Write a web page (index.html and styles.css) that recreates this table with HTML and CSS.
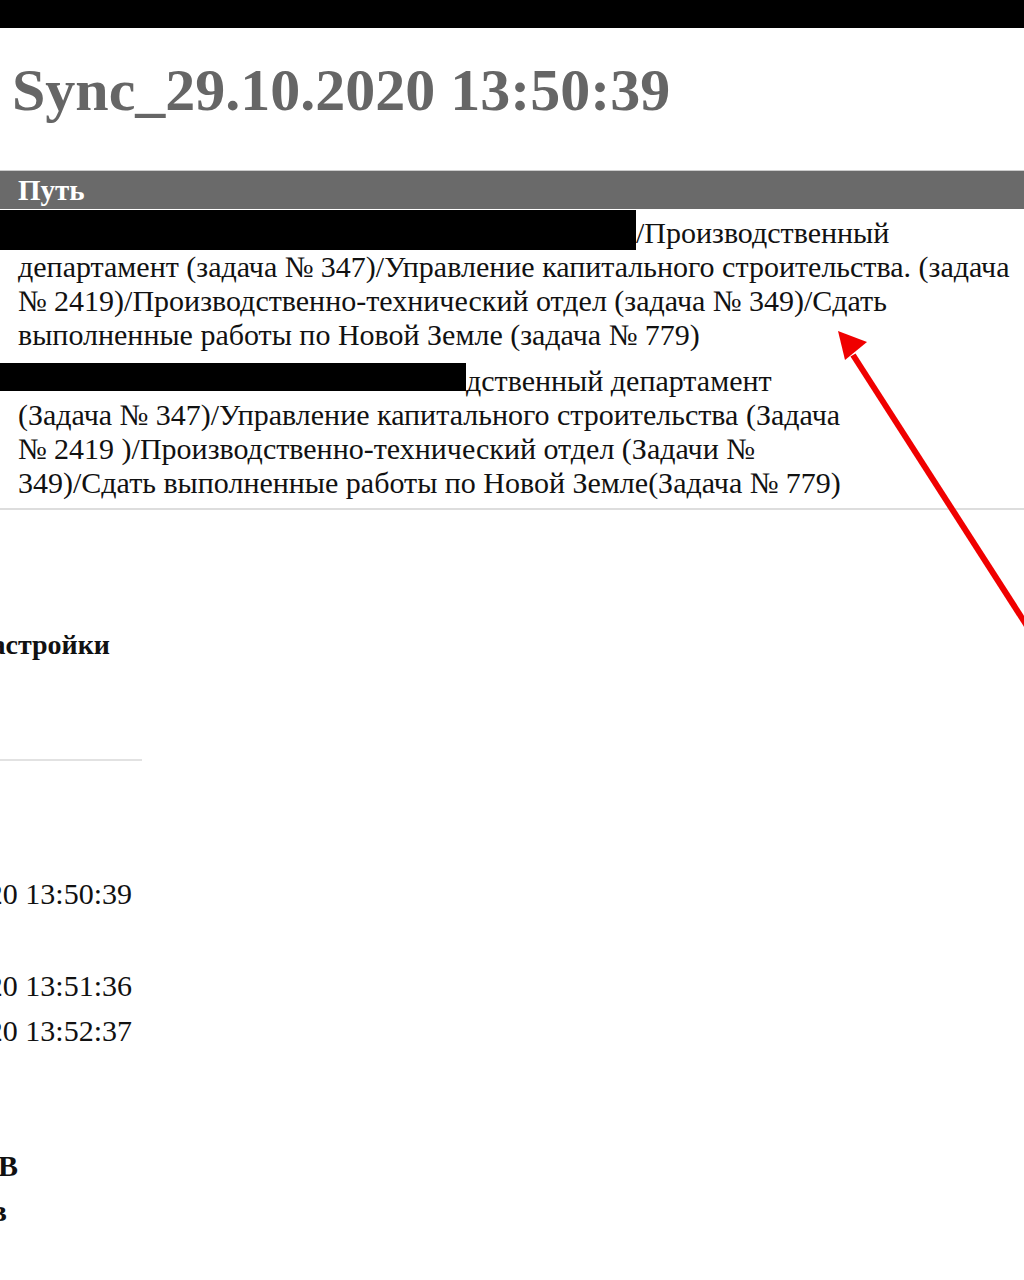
FILE: index.html
```html
<!DOCTYPE html>
<html lang="ru">
<head>
    <meta charset="UTF-8">
    <title>Sync_29.10.2020 13:50:39</title>
    <link rel="stylesheet" href="styles.css">
</head>
<body>
    <div class="topbar"></div>
    <h1 class="title">Sync_29.10.2020 13:50:39</h1>

    <table class="paths">
        <tr><th>Путь</th></tr>
        <tr>
            <td><span class="redact r1"></span>/Производственный<br>департамент (задача № 347)/Управление капитального строительства. (задача<br>№ 2419)/Производственно-технический отдел (задача № 349)/Сдать<br>выполненные работы по Новой Земле (задача № 779)</td>
        </tr>
        <tr>
            <td><span class="redact r2"></span>дственный департамент<br>(Задача № 347)/Управление капитального строительства (Задача<br>№ 2419 )/Производственно-технический отдел (Задачи №<br>349)/Сдать выполненные работы по Новой Земле(Задача № 779)</td>
        </tr>
    </table>

    <div class="side">
        <div class="line head">Настройки</div>
        <hr class="side-rule">
        <div class="line stamp first">29.10.2020 13:50:39</div>
        <div class="line stamp gap">29.10.2020 13:51:36</div>
        <div class="line stamp">29.10.2020 13:52:37</div>
        <div class="line size big">Размер: 0 КВ</div>
        <div class="line size small">Всего: 0 в</div>
    </div>

    <svg class="arrow" width="200" height="310" viewBox="0 0 200 310">
        <line x1="194" y1="298" x2="18" y2="24" stroke="#f00000" stroke-width="6"/>
        <polygon points="3,0 32,11 10,29" fill="#f00000"/>
    </svg>
</body>
</html>
```

FILE: styles.css
```css
body {
    margin: 0;
    font-family: "Liberation Serif", "Times New Roman", serif;
    color: #111;
    background: #fff;
    position: relative;
    overflow: hidden;
    height: 1280px;
}
.topbar {
    height: 28px;
    background: #000;
}
.title {
    margin: 27px 0 45px 12px;
    font-size: 60px;
    line-height: 70px;
    color: #666;
    font-weight: bold;
}
.paths {
    width: 100%;
    border-collapse: collapse;
}
.paths th {
    background: #6a6a6a;
    color: #fff;
    text-align: left;
    font-size: 29px;
    line-height: 32px;
    padding: 3px 18px 3px;
    border-top: 1px solid #ccc;
}
.paths td {
    font-size: 30px;
    line-height: 34px;
    padding: 7px 0 5px 18px;
    vertical-align: top;
    white-space: nowrap;
}
.paths tr:last-child td {
    border-bottom: 2px solid #ddd;
    padding-bottom: 8px;
}
.redact {
    display: inline-block;
    background: #000;
    margin-left: -18px;
    vertical-align: top;
}
.r1 {
    width: 636px;
    height: 40px;
    margin-top: -6px;
}
.r2 {
    width: 466px;
    height: 28px;
    margin-top: -1px;
}
.side {
    width: 142px;
    overflow: hidden;
}
.line {
    display: flex;
    justify-content: flex-end;
    white-space: nowrap;
    font-size: 30px;
    line-height: 45px;
}
.head {
    margin-top: 112px;
    padding-right: 32px;
    font-size: 28px;
    font-weight: bold;
}
.side-rule {
    border: none;
    border-top: 2px solid #e2e2e2;
    margin: 92px 0 0 0;
}
.stamp {
    padding-right: 10px;
}
.stamp.first {
    margin-top: 110px;
}
.stamp.gap {
    margin-top: 47px;
}
.size {
    font-weight: bold;
    padding-right: 124px;
}
.size.big {
    margin-top: 90px;
}
.size.small {
    padding-right: 135px;
}
.arrow {
    position: absolute;
    left: 835px;
    top: 331px;
}
```
